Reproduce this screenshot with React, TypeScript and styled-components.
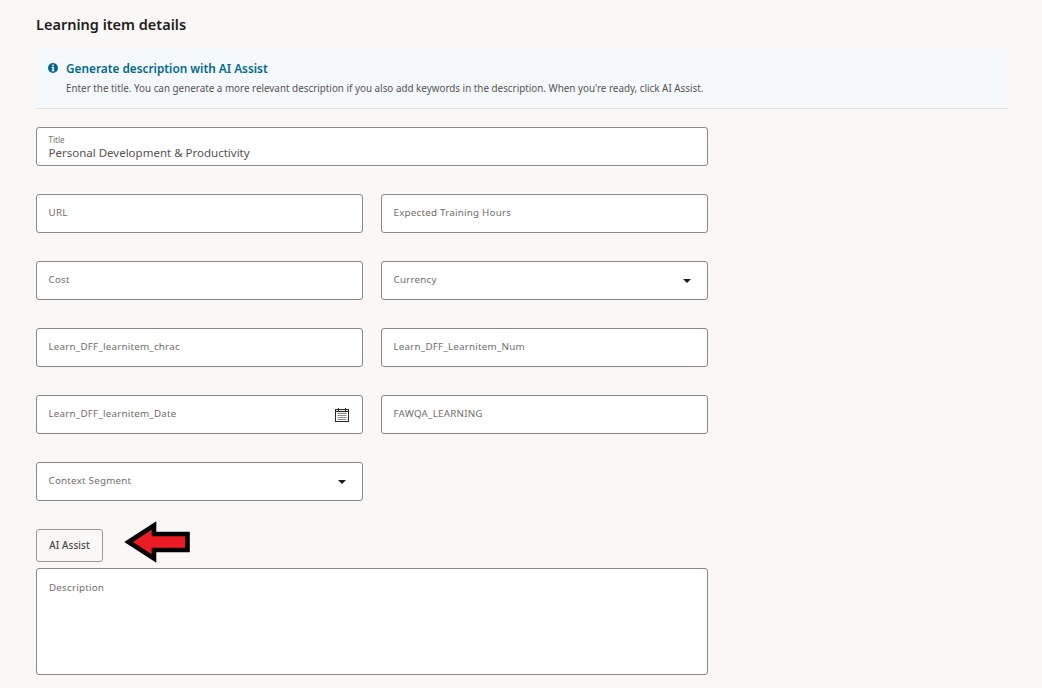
import { createGlobalStyle, styled } from "styled-components"

const GlobalStyle = createGlobalStyle`
  html, body {
    margin: 0;
    padding: 0;
    background: #f9f8f6;
    font-family: "Noto Sans", "Open Sans", sans-serif;
  }
  * {
    box-sizing: border-box;
  }
`

function CaretIcon (): JSX.Element {
  return (
    <Caret viewBox="0 0 8 4" width="8" height="4">
      <path d="M0 0h8L4 4z" fill="#1d1b19" />
    </Caret>
  )
}

function CalendarIcon (): JSX.Element {
  return (
    <CalendarSvg viewBox="0 0 14 14" width="14" height="14" fill="none" stroke="#2b2926">
      <rect x="0.5" y="1.5" width="13" height="12" />
      <path d="M3.5 0v3M10.5 0v3" />
      <path d="M0.5 3.5h13" strokeWidth="1.2" />
      <path d="M2.5 5.5h9M2.5 7.5h9M2.5 9.5h9M2.5 11.5h9" stroke="#8f8c88" />
    </CalendarSvg>
  )
}

function App (): JSX.Element {
  return (
    <Page>
      <GlobalStyle />
      <Heading>Learning item details</Heading>
      <Banner>
        <BannerTitle>
          <svg viewBox="0 0 10 10" width="10" height="10">
            <circle cx="5" cy="5" r="5" fill="#00688c" />
            <rect x="4.2" y="1.6" width="1.6" height="1.6" fill="#fff" />
            <path d="M3.6 4h2.2v3.4h.8v.9H3.6v-.9h.8V4.9h-.8z" fill="#fff" />
          </svg>
          Generate description with AI Assist
        </BannerTitle>
        <BannerText>
          Enter the title. You can generate a more relevant description if you also add keywords in the description. When you're ready, click AI Assist.
        </BannerText>
      </Banner>
      <Form>
        <Field $wide $filled>
          <SmallLabel>Title</SmallLabel>
          <Value>Personal Development &amp; Productivity</Value>
        </Field>
        <Field><Label>URL</Label></Field>
        <Field><Label>Expected Training Hours</Label></Field>
        <Field><Label>Cost</Label></Field>
        <Field><Label>Currency</Label><CaretIcon /></Field>
        <Field><Label>Learn_DFF_learnitem_chrac</Label></Field>
        <Field><Label>Learn_DFF_Learnitem_Num</Label></Field>
        <Field><Label>Learn_DFF_learnitem_Date</Label><CalendarIcon /></Field>
        <Field><Label>FAWQA_LEARNING</Label></Field>
        <Field><Label>Context Segment</Label><CaretIcon /></Field>
      </Form>
      <ActionRow>
        <AssistButton>AI Assist</AssistButton>
        <svg viewBox="0 0 67 42" width="67" height="42">
          <path d="M4.5 21L30 4.5V13H63.5V29H30V37.5Z" fill="#ed1c24" stroke="#000" strokeWidth="4.6" strokeMiterlimit="6" />
        </svg>
      </ActionRow>
      <Description>
        <Label>Description</Label>
      </Description>
    </Page>
  )
}

export default App

const Page = styled.div`
  width: 1042px;
  height: 688px;
  padding: 14px 34px 0 36px;
  overflow: hidden;
  background: #f9f8f6;
`

const Heading = styled.h1`
  margin: 0 0 14px;
  height: 20px;
  font-size: 14.5px;
  line-height: 20px;
  font-weight: 600;
  color: #1f1d1b;
`

const Banner = styled.div`
  height: 61px;
  padding: 12px 12px 0;
  background: #f5f9fc;
  border-bottom: 1px solid #dfe1e2;
`

const BannerTitle = styled.div`
  display: flex;
  align-items: center;
  gap: 8px;
  height: 16px;
  font-size: 11.8px;
  font-weight: 600;
  color: #00688c;
`

const BannerText = styled.div`
  margin: 5px 0 0 18px;
  font-size: 9.86px;
  line-height: 14px;
  color: #55524f;
  white-space: nowrap;
`

const Form = styled.div`
  display: grid;
  grid-template-columns: 327px 327px;
  grid-auto-rows: 39px;
  column-gap: 18px;
  row-gap: 28px;
  margin-top: 18px;
  width: 672px;
`

const Field = styled.div<{ $wide?: boolean; $filled?: boolean }>`
  grid-column: ${(props) => (props.$wide ? "1 / span 2" : "auto")};
  display: flex;
  flex-direction: ${(props) => (props.$filled ? "column" : "row")};
  justify-content: ${(props) => (props.$filled ? "center" : "space-between")};
  align-items: ${(props) => (props.$filled ? "flex-start" : "center")};
  padding: 0 12px 2px 11.5px;
  background: #fff;
  border: 1px solid #8a8784;
  border-radius: 3px;
`

const Label = styled.span`
  font-size: 9.8px;
  letter-spacing: 0.22px;
  line-height: 14px;
  color: #716e6b;
`

const SmallLabel = styled.span`
  font-size: 8px;
  line-height: 10px;
  margin-top: 4px;
  color: #716e6b;
`

const Value = styled.span`
  font-size: 11.5px;
  line-height: 15px;
  color: #55524f;
`

const Caret = styled.svg`
  margin: 2px 4px 0 0;
`

const CalendarSvg = styled.svg`
  margin: 2px 1px 0 0;
`

const ActionRow = styled.div`
  display: flex;
  align-items: center;
  gap: 21px;
  height: 42px;
  margin-top: 20px;
`

const AssistButton = styled.button`
  width: 67px;
  height: 33px;
  margin-top: 7px;
  padding: 0;
  background: transparent;
  border: 1px solid #9b9894;
  border-radius: 3px;
  font-family: inherit;
  font-size: 9.8px;
  letter-spacing: 0.12px;
  font-weight: 500;
  color: #4a4744;
`

const Description = styled.div`
  width: 672px;
  height: 107px;
  margin-top: 5px;
  padding: 5px 12px;
  background: #fff;
  border: 1px solid #8a8784;
  border-radius: 3px;
`
